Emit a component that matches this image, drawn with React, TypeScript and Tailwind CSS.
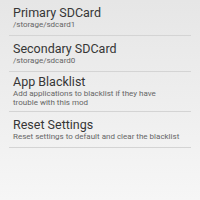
const items = [
  { title: "Primary SDCard", summary: "/storage/sdcard1" },
  { title: "Secondary SDCard", summary: "/storage/sdcard0" },
  { title: "App Blacklist", summary: "Add applications to blacklist if they have trouble with this mod" },
  { title: "Reset Settings", summary: "Reset settings to default and clear the blacklist" },
];

export default function App() {
  return (
    <div
      className="h-[200px] w-[200px] overflow-hidden bg-gradient-to-b from-[#e6e6e6] to-[#f6f6f6] px-[9px]"
      style={{ fontFamily: "Roboto, 'Noto Sans', sans-serif" }}
    >
      {items.map((item) => (
        <div
          key={item.title}
          className="flex min-h-[36px] flex-col justify-center border-b border-[#d4d4d4] py-[4px] pl-[4px] pr-[10px]"
        >
          <div className="mb-[2px] text-[12.5px] leading-[11px] text-[#363636]">{item.title}</div>
          <div className="text-[8px] leading-[9px] text-[#666666]">{item.summary}</div>
        </div>
      ))}
    </div>
  );
}
